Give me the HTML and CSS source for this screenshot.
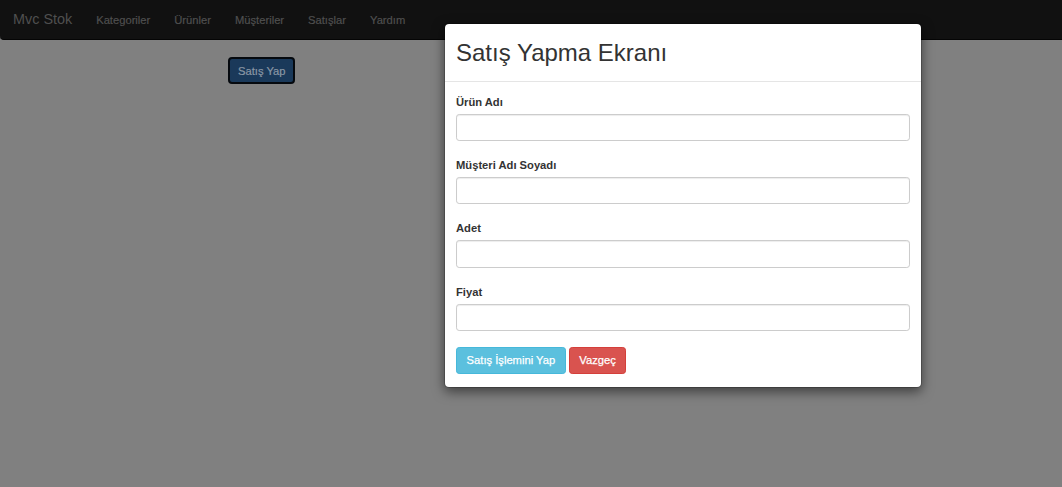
FILE: index.html
```html
<!DOCTYPE html>
<html lang="tr">
<head>
<meta charset="utf-8">
<title>Mvc Stok</title>
<link rel="stylesheet" href="styles.css">
</head>
<body>
<nav class="navbar">
  <a class="brand" href="#">Mvc Stok</a>
  <ul class="nav">
    <li><a href="#">Kategoriler</a></li>
    <li><a href="#">Ürünler</a></li>
    <li><a href="#">Müşteriler</a></li>
    <li><a href="#">Satışlar</a></li>
    <li><a href="#">Yardım</a></li>
  </ul>
</nav>
<main class="page">
  <button class="btn-primary" type="button">Satış Yap</button>
</main>

<div class="modal">
  <div class="modal-header">
    <h2 class="modal-title">Satış Yapma Ekranı</h2>
  </div>
  <form class="modal-body">
    <div class="form-group">
      <label>Ürün Adı</label>
      <input class="form-control" type="text">
    </div>
    <div class="form-group">
      <label>Müşteri Adı Soyadı</label>
      <input class="form-control" type="text">
    </div>
    <div class="form-group">
      <label>Adet</label>
      <input class="form-control" type="text">
    </div>
    <div class="form-group">
      <label>Fiyat</label>
      <input class="form-control" type="text">
    </div>
    <div class="actions">
      <button class="btn btn-info" type="button">Satış İşlemini Yap</button>
      <button class="btn btn-danger" type="button">Vazgeç</button>
    </div>
  </form>
</div>
</body>
</html>
```

FILE: styles.css
```css
* { box-sizing: border-box; }

html, body {
  margin: 0;
  height: 100%;
}

body {
  background: #808080;
  font-family: "Liberation Sans", Arial, sans-serif;
  font-size: 11.2px;
  line-height: 16px;
  color: #333;
  overflow: hidden;
}

.navbar {
  display: flex;
  align-items: stretch;
  height: 40px;
  background: #111111;
  border-bottom: 1px solid #050505;
  border-bottom-left-radius: 4px;
}

.brand {
  padding: 0 12px 0 13px;
  font-size: 14.4px;
  line-height: 39px;
  color: #4f4f4f;
  text-decoration: none;
}

.nav {
  display: flex;
  list-style: none;
  margin: 0;
  padding: 0;
}

.nav a {
  display: block;
  padding: 12px 12px 11px;
  color: #4f4f4f;
  text-decoration: none;
  -webkit-text-stroke: 0.2px #4f4f4f;
}

.page {
  padding: 17px 0 0 228px;
}

.btn-primary {
  height: 27px;
  padding: 0 8px;
  font-family: inherit;
  font-size: 11.2px;
  color: #8a97a5;
  background: #1a395a;
  border: 2px solid #05090e;
  border-radius: 4px;
  -webkit-text-stroke: 0.2px #8a97a5;
}

.modal {
  position: absolute;
  top: 23px;
  left: 444px;
  width: 478px;
  background: #fff;
  border: 1px solid rgba(0, 0, 0, 0.2);
  border-radius: 5px;
  box-shadow: 0 4px 12px rgba(0, 0, 0, 0.5);
  background-clip: padding-box;
}

.modal-header {
  padding: 13px 11px 12px;
  border-bottom: 1px solid #e5e5e5;
}

.modal-title {
  margin: 0;
  font-size: 24px;
  font-weight: normal;
  line-height: 32px;
  color: #333;
}

.modal-body {
  margin: 0;
  padding: 12px 11px 13px;
}

.form-group {
  margin-bottom: 16px;
}

label {
  display: block;
  margin-bottom: 4px;
  font-weight: bold;
  line-height: 16px;
}

.form-control {
  display: block;
  width: 100%;
  height: 27.2px;
  padding: 4px 9.6px;
  font-family: inherit;
  font-size: 11.2px;
  color: #555;
  background: #fff;
  border: 1px solid #ccc;
  border-radius: 3.2px;
  box-shadow: inset 0 1px 1px rgba(0, 0, 0, 0.075);
}

.actions {
  display: flex;
  gap: 3px;
}

.btn {
  height: 27.2px;
  padding: 0 9.6px;
  font-family: inherit;
  font-size: 11.2px;
  color: #fff;
  border: 1px solid transparent;
  border-radius: 3.2px;
  -webkit-text-stroke: 0.25px #fff;
}

.btn-info {
  background: #5bc0de;
  border-color: #46b8da;
}

.btn-danger {
  background: #d9534f;
  border-color: #d43f3a;
}
```
